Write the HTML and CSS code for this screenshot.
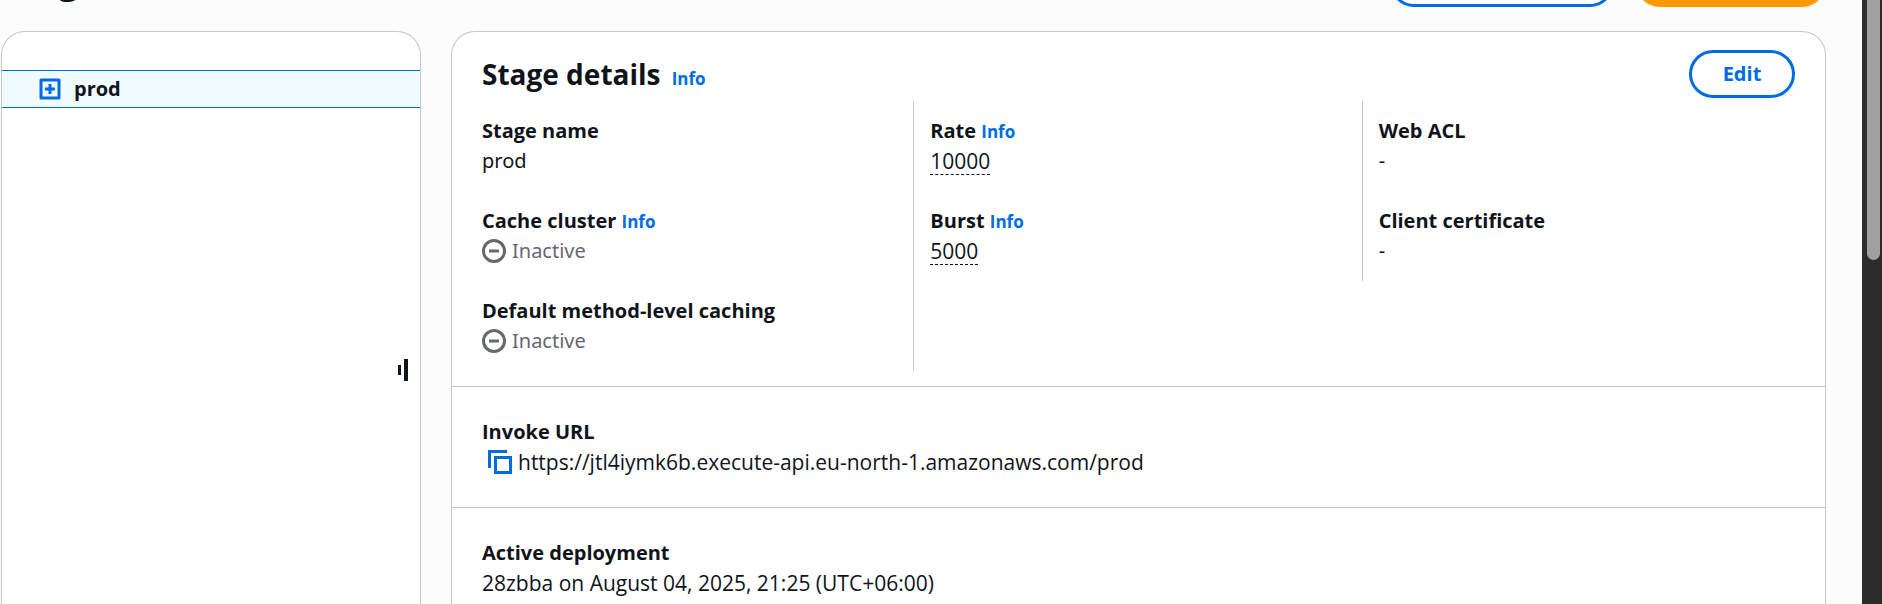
FILE: index.html
```html
<!DOCTYPE html>
<html lang="en">
<head>
<meta charset="utf-8">
<title>Stages</title>
<link rel="stylesheet" href="styles.css">
</head>
<body>
<div class="viewport">
  <div class="page">
    <header class="page-header">
      <h1 class="page-title">Stages</h1>
      <div class="actions">
        <button class="button button-menu" type="button" aria-label="Stage actions"></button>
        <button class="button button-primary" type="button" aria-label="Create stage"></button>
      </div>
    </header>
    <div class="layout">
      <nav class="card stages" aria-label="Stages">
        <div class="stage-row">
          <button class="expand" type="button" aria-label="Expand prod">
            <svg width="22" height="22" viewBox="0 0 22 22" fill="none" stroke="currentColor" stroke-width="3"><rect x="2" y="2" width="18" height="18" stroke-linejoin="round"/><path d="M6 11h10M11 6v10"/></svg>
          </button>
          <span class="stage-name">prod</span>
        </div>
        <div class="resize-area">
          <button class="resize" type="button" aria-label="Resize panel">
            <svg width="10" height="22" viewBox="0 0 10 22" fill="currentColor"><path d="M0 6h3v10H0zM6 0h4v22H6z"/></svg>
          </button>
        </div>
      </nav>
      <main class="card details">
        <div class="card-header">
          <h2 class="card-title">Stage details <a class="info info-title" href="#">Info</a></h2>
          <button class="button button-edit" type="button">Edit</button>
        </div>
        <div class="columns">
          <dl class="column">
            <div class="field"><dt>Stage name</dt><dd>prod</dd></div>
            <div class="field"><dt>Cache cluster <a class="info" href="#">Info</a></dt>
              <dd class="inactive"><svg width="24" height="24" viewBox="0 0 24 24" fill="none" stroke="currentColor" stroke-width="3"><circle cx="12" cy="12" r="10.5"/><path d="M7 12h10"/></svg>Inactive</dd></div>
            <div class="field"><dt>Default method-level caching</dt>
              <dd class="inactive"><svg width="24" height="24" viewBox="0 0 24 24" fill="none" stroke="currentColor" stroke-width="3"><circle cx="12" cy="12" r="10.5"/><path d="M7 12h10"/></svg>Inactive</dd></div>
          </dl>
          <dl class="column">
            <div class="field"><dt>Rate <a class="info" href="#">Info</a></dt><dd class="wide"><span class="hint">10000</span></dd></div>
            <div class="field"><dt>Burst <a class="info" href="#">Info</a></dt><dd class="wide"><span class="hint">5000</span></dd></div>
          </dl>
          <dl class="column">
            <div class="field"><dt>Web ACL</dt><dd>-</dd></div>
            <div class="field"><dt>Client certificate</dt><dd>-</dd></div>
          </dl>
        </div>
        <dl class="section">
          <dt>Invoke URL</dt>
          <dd class="url wide"><button class="copy" type="button" aria-label="Copy invoke URL"><svg width="24" height="24" viewBox="0 0 24 24" fill="none" stroke="currentColor" stroke-width="3"><path d="M1.500 18V1.500H19"/><rect x="7.500" y="7.500" width="15" height="15"/></svg></button>https://jtl4iymk6b.execute-api.eu-north-1.amazonaws.com/prod</dd>
        </dl>
        <dl class="section">
          <dt>Active deployment</dt>
          <dd class="wide">28zbba on August 04, 2025, 21:25 (UTC+06:00)</dd>
        </dl>
      </main>
    </div>
  </div>
  <div class="scrollbar" aria-hidden="true"><div class="thumb"></div></div>
</div>
</body>
</html>
```
FILE: styles.css
```css
* { box-sizing: border-box; }
body {
  margin: 0;
  background: #fcfcfd;
  color: #0f141a;
  font-family: "Noto Sans", "Open Sans", sans-serif;
  font-size: 20px;
  line-height: 30px;
}
h1, h2, dl, dd { margin: 0; }
button { font: inherit; cursor: pointer; }
svg { display: block; flex: none; }

.viewport { display: flex; height: 100vh; overflow: hidden; }
.page { flex: 1; min-width: 0; display: flex; flex-direction: column; padding: 0 36px 0 1px; }

.page-header {
  flex: none;
  display: flex;
  justify-content: space-between;
  align-items: flex-end;
  height: 7px;
  margin-bottom: 24px;
}
.page-title { font-size: 36px; line-height: 54px; }
.actions { display: flex; gap: 22px; }
.button {
  height: 48px;
  border: 3px solid #006ce0;
  border-radius: 24px;
  background: #fff;
  color: #006ce0;
  font-weight: 700;
}
.button-menu { width: 224px; }
.button-primary { width: 190px; border-color: #ff9900; background: #ff9900; color: #0f141a; }
.button-edit { width: 106px; font-family: "Open Sans", sans-serif; }

.layout { flex: 1; display: grid; grid-template-columns: 420px 1fr; gap: 30px; min-height: 0; }
.card { border: 1px solid #c6c6cd; border-bottom: 0; border-radius: 24px 24px 0 0; background: #fff; }

.stages { display: flex; flex-direction: column; padding-top: 38px; }
.stage-row {
  display: flex;
  align-items: center;
  gap: 13px;
  height: 38px;
  padding-left: 37px;
  border: solid #006ce0;
  border-width: 1px 0;
  background: #f0fbff;
}
.page-title, .stage-name, dt, .card-title { font-family: "Open Sans", sans-serif; font-weight: 700; }
.expand, .copy, .resize { padding: 0; border: 0; background: none; color: #006ce0; }
.resize-area { flex: 1; display: flex; justify-content: flex-end; align-items: flex-start; padding: 251px 12px 0 0; }
.resize { color: #0f141a; }

.card-header { display: flex; justify-content: space-between; align-items: center; padding: 18px 30px 3px; }
.card-title { font-size: 28px; line-height: 36px; }
.info { color: #006ce0; font-size: 17px; line-height: 1; text-decoration: none; }
.info-title { margin-left: 4px; }

.columns { display: grid; grid-template-columns: repeat(3, 1fr); align-items: start; padding: 0 14px 15px; }
.column { padding: 0 16px; }
.column:not(:last-child) { border-right: 1px solid #c6c6cd; }
.field { padding: 15px 0; }
.wide { font-size: 21px; font-family: "Open Sans", sans-serif; }
.inactive { display: flex; align-items: center; gap: 6px; color: #656871; }
.hint { display: inline-block; line-height: 25px; border-bottom: 1px dashed #0f141a; }
.section { padding: 30px; border-top: 1px solid #c6c6cd; }
.url { display: flex; align-items: center; gap: 6px; padding-left: 6px; }

.scrollbar { flex: none; width: 20px; padding: 0 2px 0 5px; background: #2c2c2c; }
.thumb { height: 43vh; border-radius: 0 0 7px 7px; background: #9f9f9f; }
```
